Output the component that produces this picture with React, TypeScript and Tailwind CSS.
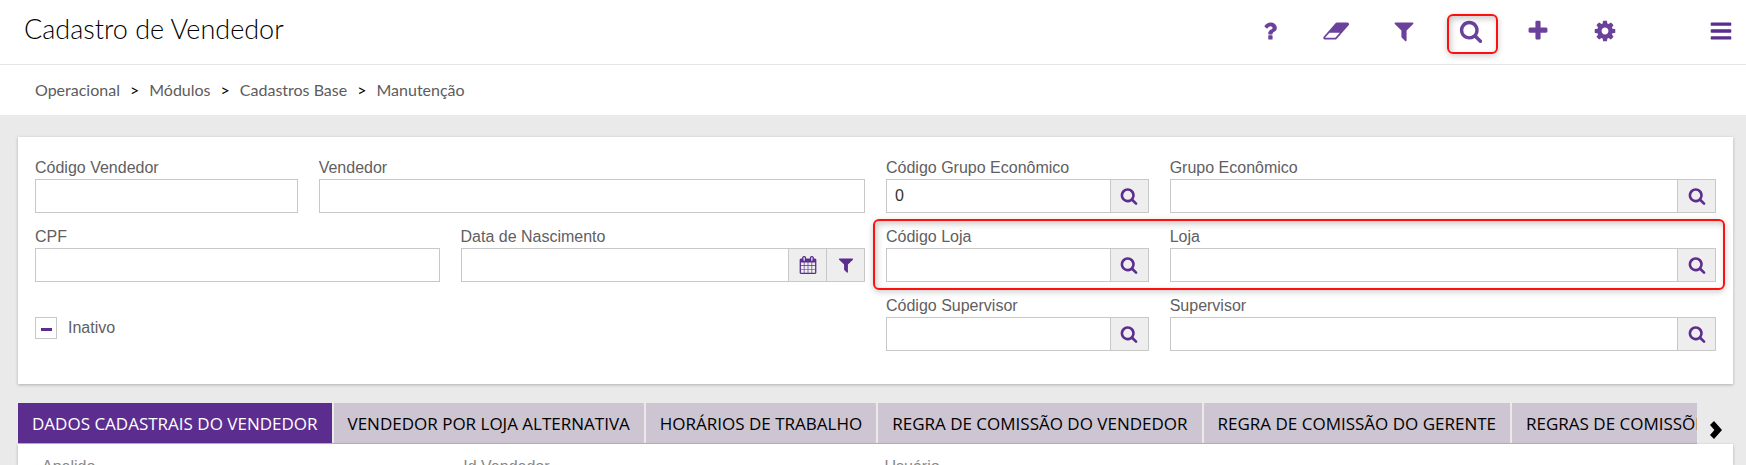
import type { ReactNode } from "react";

// Icon shapes, all on a 1792 unit grid
const icons = {
  question:
    "M1088 1256v240q0 16-12 28t-28 12h-240q-16 0-28-12t-12-28v-240q0-16 12-28t28-12h240q16 0 28 12t12 28zm316-600q0 54-15.5 101t-35 76.5-55 59.5-57.5 43.5-61 35.5q-41 23-68.5 65t-27.5 67q0 17-12 32.5t-28 15.5h-240q-15 0-25.5-18.5t-10.5-37.5v-45q0-83 65-156.5t143-108.5q59-27 84-56t25-76q0-42-46.5-74t-107.5-32q-65 0-108 29-35 25-107 115-13 16-31 16-12 0-25-8l-164-125q-13-10-15.5-25t5.5-28q160-266 464-266 80 0 161 31t146 83 106 127.5 41 158.5z",
  eraser:
    "M768 1408l336-384h-768l-336 384h768zm1013-1077q15 34 9.5 71.5t-30.5 65.5l-896 1024q-38 44-96 44h-768q-38 0-69.5-20.5t-47.5-54.5q-15-34-9.5-71.5t30.5-65.5l896-1024q38-44 96-44h768q38 0 69.5 20.5t47.5 54.5z",
  filter:
    "M1595 295q17 41-14 70l-493 493v742q0 42-39 59-13 5-25 5-27 0-45-19l-256-256q-19-19-19-45v-486l-493-493q-31-29-14-70 17-39 59-39h1280q42 0 59 39z",
  search:
    "M1216 832q0-185-131.5-316.5t-316.5-131.5-316.5 131.5-131.5 316.5 131.5 316.5 316.5 131.5 316.5-131.5 131.5-316.5zm512 832q0 52-38 90t-90 38q-54 0-90-38l-343-342q-179 124-399 124-143 0-273.5-55.5t-225-150-150-225-55.5-273.5 55.5-273.5 150-225 225-150 273.5-55.5 273.5 55.5 225 150 150 225 55.5 273.5q0 220-124 399l343 343q37 37 37 90z",
  plus:
    "M1600 736v192q0 40-28 68t-68 28h-416v416q0 40-28 68t-68 28h-192q-40 0-68-28t-28-68v-416h-416q-40 0-68-28t-28-68v-192q0-40 28-68t68-28h416v-416q0-40 28-68t68-28h192q40 0 68 28t28 68v416h416q40 0 68 28t28 68z",
  cog:
    "M1152 896q0-106-75-181t-181-75-181 75-75 181 75 181 181 75 181-75 75-181zm512-109v222q0 12-8 23t-20 13l-185 28q-19 54-39 91 35 50 107 138 10 12 10 25t-9 23q-27 37-99 108t-94 71q-12 0-26-9l-138-108q-44 23-91 38-16 136-29 186-7 28-36 28h-222q-14 0-24.5-8.5t-11.5-21.5l-28-184q-49-16-90-37l-141 107q-10 9-25 9-14 0-25-11-126-114-165-168-7-10-7-23 0-12 8-23 15-21 51-66.5t54-70.5q-27-50-41-99l-183-27q-13-2-21-12.5t-8-23.5v-222q0-12 8-23t19-13l186-28q14-46 39-92-40-57-107-138-10-12-10-24 0-10 9-23 26-36 98.5-107.5t94.5-71.5q13 0 26 10l138 107q44-23 91-38 16-136 29-186 7-28 36-28h222q14 0 24.5 8.5t11.5 21.5l28 184q49 16 90 37l142-107q9-9 24-9 13 0 25 10 129 119 165 170 7 8 7 22 0 12-8 23-15 21-51 66.5t-54 70.5q26 50 41 98l183 28q13 2 21 12.5t8 23.5z",
  bars:
    "M192 256h1408q64 0 64 64v128q0 64-64 64h-1408q-64 0-64-64v-128q0-64 64-64zm0 512h1408q64 0 64 64v128q0 64-64 64h-1408q-64 0-64-64v-128q0-64 64-64zm0 512h1408q64 0 64 64v128q0 64-64 64h-1408q-64 0-64-64v-128q0-64 64-64z",
  calendar:
    "M192 1664h288v-288h-288v288zm352 0h320v-288h-320v288zm-352-352h288v-320h-288v320zm352 0h320v-320h-320v320zm-352-384h288v-288h-288v288zm736 736h320v-288h-320v288zm-384-736h320v-288h-320v288zm768 736h288v-288h-288v288zm-384-352h320v-320h-320v320zm-352-864v-288q0-13-9.5-22.5t-22.5-9.5h-64q-13 0-22.5 9.5t-9.5 22.5v288q0 13 9.5 22.5t22.5 9.5h64q13 0 22.5-9.5t9.5-22.5zm736 864h288v-320h-288v320zm-384-384h320v-288h-320v288zm384 0h288v-288h-288v288zm32-480v-288q0-13-9.5-22.5t-22.5-9.5h-64q-13 0-22.5 9.5t-9.5 22.5v288q0 13 9.5 22.5t22.5 9.5h64q13 0 22.5-9.5t9.5-22.5zm384-64v1280q0 52-38 90t-90 38h-1408q-52 0-90-38t-38-90v-1280q0-52 38-90t90-38h128v-96q0-66 47-113t113-47h64q66 0 113 47t47 113v96h384v-96q0-66 47-113t113-47h64q66 0 113 47t47 113v96h128q52 0 90 38t38 90z",
};

type IconName = keyof typeof icons;

function Icon({ name, className }: { name: IconName; className: string }) {
  return (
    <svg viewBox="0 0 1792 1792" fill="currentColor" className={`overflow-visible ${className}`} aria-hidden="true">
      <path d={icons[name]} />
    </svg>
  );
}

const actions: { icon: IconName; label: string; marked?: boolean }[] = [
  { icon: "question", label: "Ajuda" },
  { icon: "eraser", label: "Limpar" },
  { icon: "filter", label: "Filtrar" },
  { icon: "search", label: "Pesquisar", marked: true },
  { icon: "plus", label: "Novo" },
  { icon: "cog", label: "Configurar" },
];

const crumbs = ["Operacional", "Módulos", "Cadastros Base", "Manutenção"];

const tabs = [
  "DADOS CADASTRAIS DO VENDEDOR",
  "VENDEDOR POR LOJA ALTERNATIVA",
  "HORÁRIOS DE TRABALHO",
  "REGRA DE COMISSÃO DO VENDEDOR",
  "REGRA DE COMISSÃO DO GERENTE",
  "REGRAS DE COMISSÕES",
];

// Red frame that points at a part of the screen
function Highlight({ className }: { className: string }) {
  return (
    <span
      className={`pointer-events-none absolute rounded-md border-2 border-[#ff1010] shadow-[0_2px_6px_rgba(0,0,0,0.2),inset_2px_3px_6px_rgba(0,0,0,0.2)] ${className}`}
    />
  );
}

interface FieldProps {
  id: string;
  label: string;
  span: string;
  value?: string;
  buttons?: { icon: IconName; label: string }[];
}

function Field({ id, label, span, value = "", buttons = [] }: FieldProps) {
  return (
    <div className={`min-w-0 ${span}`}>
      <label htmlFor={id} className="mb-px block text-base leading-5 text-[#5f6062]">
        {label}
      </label>
      <div className="flex h-[34px] border border-[#c8c8c8] bg-white">
        <input id={id} type="text" defaultValue={value} className="min-w-0 flex-1 px-2 text-base text-[#333] outline-none" />
        {buttons.map((b) => (
          <button
            key={b.icon}
            type="button"
            aria-label={b.label}
            className="flex w-[38px] items-center justify-center border-l border-[#c8c8c8] bg-[#eee] text-[#5b2d8e]"
          >
            <Icon name={b.icon} className="size-[18px]" />
          </button>
        ))}
      </div>
    </div>
  );
}

const lookup = [{ icon: "search" as const, label: "Buscar" }];

function FormGrid({ children }: { children: ReactNode }) {
  return <div className="grid grid-cols-12 gap-x-[21px] gap-y-[14px]">{children}</div>;
}

export default function App() {
  return (
    <div className="flex h-screen flex-col overflow-hidden bg-[#eaeaea] font-['Liberation_Sans',Arial,sans-serif]">
      {/* Title bar */}
      <header className="flex h-[65px] shrink-0 items-center justify-between border-b border-[#e6e6e6] bg-white pr-[13px] pb-0.5 pl-6">
        <h1 className="pb-1 font-['Lato',sans-serif] text-[27px] leading-8 font-light text-black">Cadastro de Vendedor</h1>
        <div className="flex items-center">
          {actions.map((a) => (
            <button
              key={a.icon}
              type="button"
              aria-label={a.label}
              className="relative flex h-10 w-[67px] items-center justify-center text-[#6b429b]"
            >
              <Icon name={a.icon} className="size-6" />
              {a.marked && <Highlight className="top-[3px] right-[6px] -bottom-[3px] left-[10px]" />}
            </button>
          ))}
          <button type="button" aria-label="Menu" className="ml-[71px] text-[#5b2d8e]">
            <Icon name="bars" className="size-6" />
          </button>
        </div>
      </header>

      {/* Breadcrumb */}
      <nav aria-label="Navegação" className="h-[50px] shrink-0 bg-white px-[35px] font-['Lato',sans-serif] text-base">
        <ol className="flex h-full items-center gap-[10px]">
          {crumbs.map((c, i) => (
            <li key={c} className="flex gap-[10px]">
              {i > 0 && <span className="text-black">&gt;</span>}
              <a href="#" className="text-[#5c5c5c]">
                {c}
              </a>
            </li>
          ))}
        </ol>
      </nav>

      <main className="flex min-h-0 flex-1 flex-col pt-[22px] pr-[13px] pl-[18px]">
        {/* Search form */}
        <form className="shrink-0 bg-white px-[17px] pt-[21px] pb-[33px] shadow-[0_1px_3px_rgba(0,0,0,0.25)]">
          <FormGrid>
            <Field id="codVendedor" label="Código Vendedor" span="col-span-2" />
            <Field id="vendedor" label="Vendedor" span="col-span-4" />
            <Field id="codGrupo" label="Código Grupo Econômico" span="col-span-2" value="0" buttons={lookup} />
            <Field id="grupo" label="Grupo Econômico" span="col-span-4" buttons={lookup} />

            <Field id="cpf" label="CPF" span="col-span-3" />
            <Field
              id="nascimento"
              label="Data de Nascimento"
              span="col-span-3"
              buttons={[
                { icon: "calendar", label: "Calendário" },
                { icon: "filter", label: "Filtrar data" },
              ]}
            />
            <div className="relative col-span-6 grid grid-cols-6 gap-x-[21px]">
              <Field id="codLoja" label="Código Loja" span="col-span-2" buttons={lookup} />
              <Field id="loja" label="Loja" span="col-span-4" buttons={lookup} />
              <Highlight className="-top-2 -right-[9px] -bottom-2 -left-[13px]" />
            </div>

            <div className="col-span-6 flex items-start pt-[21px]">
              <label className="flex items-center gap-[11px] text-base leading-5 text-[#5f6062]">
                <span className="grid size-[22px] place-items-center border border-[#c8c8c8]">
                  <input type="checkbox" className="col-start-1 row-start-1 size-5 appearance-none" />
                  <span className="col-start-1 row-start-1 mt-[3px] h-[3px] w-[11px] bg-[#5b2d8e]" />
                </span>
                Inativo
              </label>
            </div>
            <Field id="codSupervisor" label="Código Supervisor" span="col-span-2" buttons={lookup} />
            <Field id="supervisor" label="Supervisor" span="col-span-4" buttons={lookup} />
          </FormGrid>
        </form>

        {/* Tabs */}
        <div className="mt-[19px] flex shrink-0">
          <div role="tablist" className="flex min-w-0 flex-1 gap-[2px] overflow-hidden border-b border-[#bdb2cb] font-['Open_Sans',sans-serif]">
            {tabs.map((t, i) => (
              <button
                key={t}
                type="button"
                role="tab"
                aria-selected={i === 0}
                className={`h-10 shrink-0 px-[14px] pt-0.5 text-[17px] whitespace-nowrap ${
                  i === 0 ? "bg-[#5b2d8e] text-white" : "bg-[#cdc5d2] text-black"
                }`}
              >
                {t}
              </button>
            ))}
          </div>
          <button type="button" aria-label="Próximas abas" className="flex w-9 items-center justify-center pt-3 pl-[2px] text-black">
            <svg viewBox="0 0 12 18" className="h-[18px] w-3" fill="currentColor" aria-hidden="true">
              <path d="M4 0l8 9-8 9-4-4 4.4-5L0 4z" />
            </svg>
          </button>
        </div>

        {/* Tab content, cut off by the window */}
        <section className="grid min-h-0 flex-1 grid-cols-4 gap-x-[21px] overflow-hidden bg-white pt-[13px] pr-[27px] pl-6 text-base leading-5 text-[#888] shadow-[0_1px_3px_rgba(0,0,0,0.25)]">
          <span>Apelido</span>
          <span>Id Vendedor</span>
          <span>Usuário</span>
        </section>
      </main>
    </div>
  );
}
